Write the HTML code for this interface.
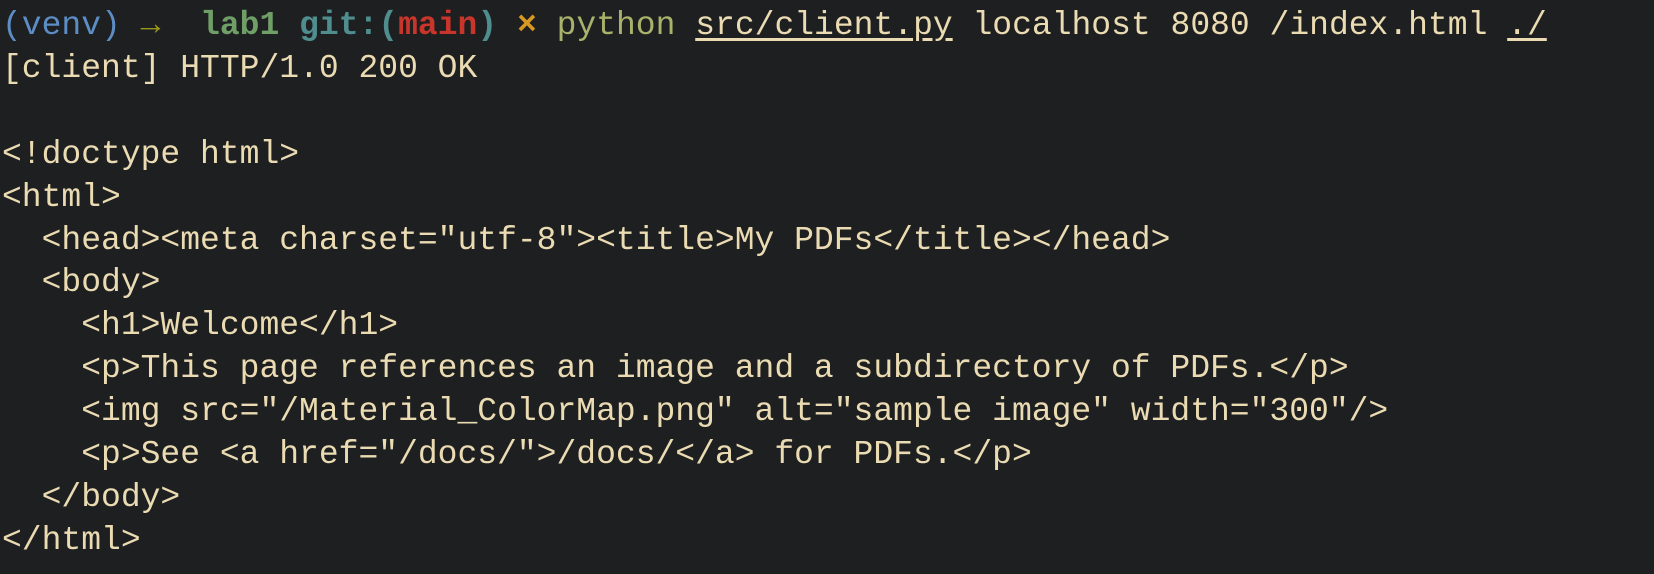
<!DOCTYPE html>
<html><head><meta charset="utf-8"><style>
html,body{margin:0;padding:0;background:#1d1f21;width:1654px;height:574px;overflow:hidden}
pre{margin:0;padding:5px 0 0 2px;font-family:"Liberation Mono",monospace;font-size:33px;line-height:42.9px;color:#ebdbb2;white-space:pre}
.b{color:#5c8dc4}.o{color:#98971a;font-weight:bold}.g{color:#6f9e67;font-weight:bold}.t{color:#4f8d8e;font-weight:bold}.r{color:#c8352a;font-weight:bold}.x{color:#d79921;font-weight:bold}.p{color:#a9b16a}.u{text-decoration:underline;text-underline-offset:4px}
</style></head><body><pre><span class="b">(venv)</span> <span class="o">→</span>  <span class="g">lab1</span> <span class="t">git:(</span><span class="r">main</span><span class="t">)</span> <span class="x">×</span> <span class="p">python</span> <span class="u">src/client.py</span> localhost 8080 /index.html <span class="u">./</span>
[client] HTTP/1.0 200 OK

&lt;!doctype html&gt;
&lt;html&gt;
  &lt;head&gt;&lt;meta charset="utf-8"&gt;&lt;title&gt;My PDFs&lt;/title&gt;&lt;/head&gt;
  &lt;body&gt;
    &lt;h1&gt;Welcome&lt;/h1&gt;
    &lt;p&gt;This page references an image and a subdirectory of PDFs.&lt;/p&gt;
    &lt;img src="/Material_ColorMap.png" alt="sample image" width="300"/&gt;
    &lt;p&gt;See &lt;a href="/docs/"&gt;/docs/&lt;/a&gt; for PDFs.&lt;/p&gt;
  &lt;/body&gt;
&lt;/html&gt;
</pre></body></html>
